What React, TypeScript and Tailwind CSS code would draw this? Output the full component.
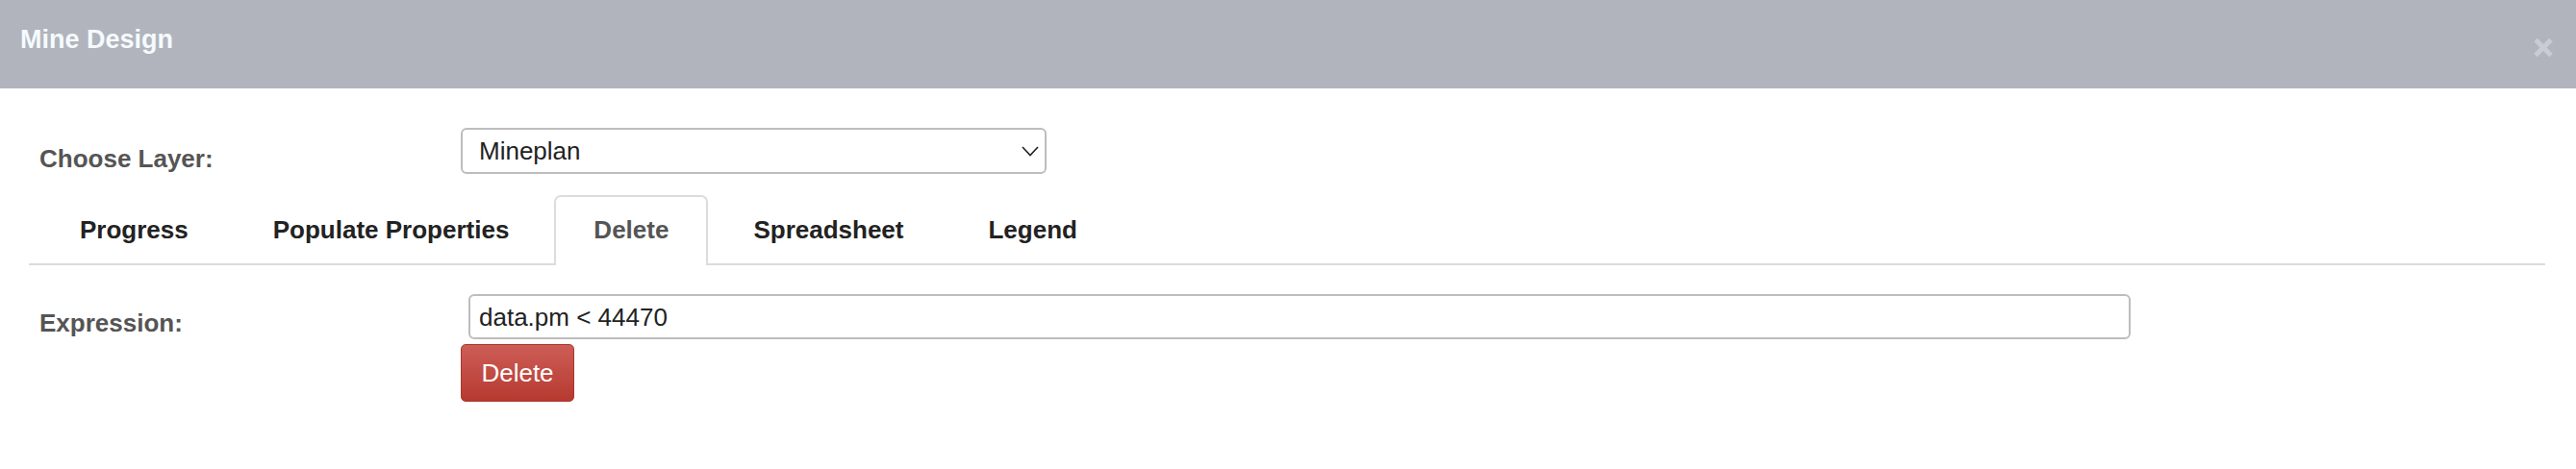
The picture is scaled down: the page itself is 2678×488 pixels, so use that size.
import React from 'react'

const tabs = ['Progress', 'Populate Properties', 'Delete', 'Spreadsheet', 'Legend']

const CloseIcon = () => (
  <svg width="22" height="23" viewBox="0 0 22 23" className="mt-[38px] mr-[23px]">
    <path d="M3 3.5 L19 19.5 M19 3.5 L3 19.5" stroke="#c9ccd2" strokeWidth="5" strokeLinecap="butt" />
  </svg>
)

const Chevron = () => (
  <svg width="18" height="11" viewBox="0 0 18 11">
    <polyline points="1,1 9,9.5 17,1" fill="none" stroke="#222" strokeWidth="1.6" />
  </svg>
)

export default function App() {
  const active = 'Delete'
  return (
    <div className="h-[488px] w-full bg-white font-['Liberation_Sans',Arial,sans-serif]">
      <header className="flex h-[92px] items-start justify-between bg-[#b1b4bc]">
        <h1 className="pl-[21px] pt-[25px] text-[27px] leading-[32px] font-bold text-[#f5faff]">
          Mine Design
        </h1>
        <CloseIcon />
      </header>

      <div className="ml-[30px] mr-[32px] pt-[41px]">
        <div className="flex items-start">
          <label className="mt-[17px] w-[449px] pl-[11px] text-[26px] leading-[30px] font-bold text-[#555]">
            Choose Layer:
          </label>
          <div className="flex h-[48px] w-[609px] items-center justify-between rounded-[6px] border-2 border-[#bdbdbd] pl-[17px] pr-[6px]">
            <span className="text-[26px] leading-[30px] text-[#222]">Mineplan</span>
            <Chevron />
          </div>
        </div>

        <ul className="mt-[22px] flex gap-[6px] border-b-2 border-[#dcdcdc] pl-[12px]">
          {tabs.map((t) => (
            <li
              key={t}
              className={
                t === active
                  ? 'mb-[-2px] rounded-t-[7px] border-2 border-b-0 border-[#dcdcdc] bg-white px-[39px] pt-[19px] pb-[22px] text-[26px] leading-[30px] font-bold text-[#555]'
                  : 'border-2 border-transparent px-[39px] pt-[19px] pb-[18px] text-[26px] leading-[30px] font-bold text-[#222]'
              }
            >
              {t}
            </li>
          ))}
        </ul>

        <div className="mt-[30px] flex items-start">
          <label className="mt-[15px] w-[449px] pl-[11px] text-[26px] leading-[30px] font-bold text-[#555]">
            Expression:
          </label>
          <div className="flex flex-col items-start">
            <div className="ml-[8px] flex h-[47px] w-[1728px] items-center rounded-[6px] border-2 border-[#bdbdbd] pl-[9px]">
              <span className="text-[26px] leading-[30px] text-[#222]">data.pm &lt; 44470</span>
            </div>
            <button className="mt-[5px] flex h-[60px] w-[118px] items-center justify-center rounded-[5px] border border-[#a9372e] bg-linear-to-b from-[#cd5d57] to-[#b6392f] text-[26px] leading-[30px] text-white">
              Delete
            </button>
          </div>
        </div>
      </div>
    </div>
  )
}
